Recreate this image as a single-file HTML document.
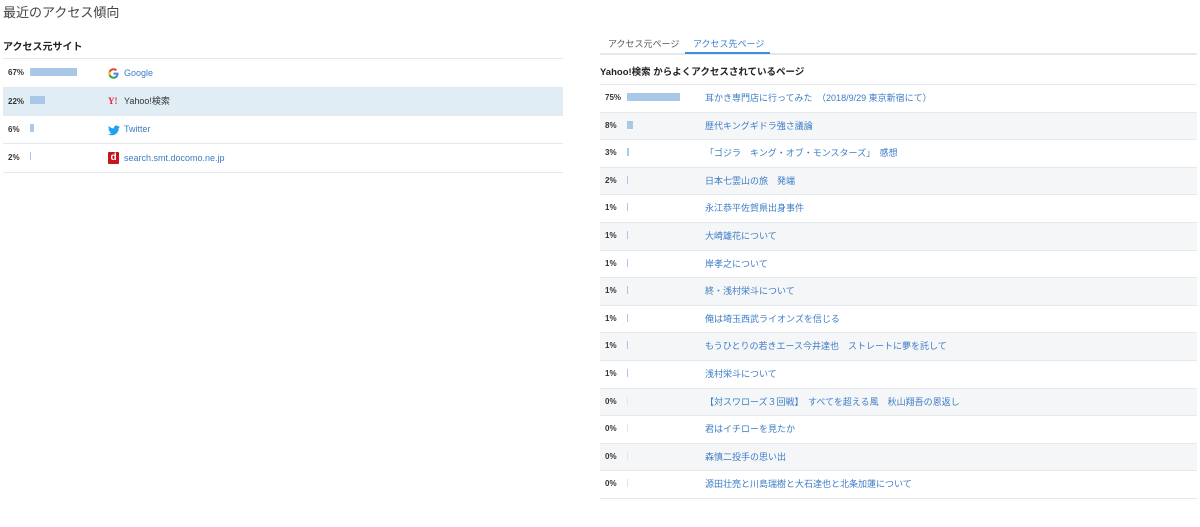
<!DOCTYPE html>
<html><head><meta charset="utf-8"><style>
*{margin:0;padding:0;box-sizing:border-box}
body{width:1200px;height:527px;background:#fff;font-family:"Liberation Sans","Noto Sans CJK JP",sans-serif;color:#333;position:relative;overflow:hidden}
.a{position:absolute}
.row{position:absolute;border-bottom:1px solid #e6e9ec;font-size:9px}
.p{position:absolute;top:0;font-size:8px;font-weight:bold;color:#333}
.bar{position:absolute;background:#a9c7e6;height:8px}
.lk{position:absolute;top:0;color:#3c7cc6;white-space:nowrap}
</style></head><body>
<div class="a" style="left:3px;top:2px;font-size:13px;color:#444">最近のアクセス傾向</div>
<div class="a" style="left:3px;top:38px;font-size:10px;font-weight:bold;color:#222">アクセス元サイト</div>
<div class="a" style="left:3px;top:58px;width:560px;height:1px;background:#e6e9ec"></div>

<div class="row" style="left:3px;top:59px;width:560px;height:29px;line-height:28px">
<span class="p" style="left:5px">67%</span><span class="bar" style="left:27px;top:9px;width:47px"></span>
<svg class="a" style="left:105px;top:9px" width="11" height="11" viewBox="0 0 24 24"><path d="M23 12.3c0-.8-.1-1.6-.2-2.3H12v4.4h6.2c-.3 1.4-1.1 2.6-2.3 3.4v2.8h3.7c2.2-2 3.4-5 3.4-8.3z" fill="#4285f4"/><path d="M12 23.5c3.1 0 5.7-1 7.6-2.8l-3.7-2.8c-1 .7-2.300 1.1-3.9 1.1-3 0-5.5-2-6.4-4.7H1.8v2.9C3.7 20.9 7.6 23.5 12 23.5z" fill="#34a853"/><path d="M5.6 14.3c-.2-.7-.4-1.5-.4-2.3s.1-1.6.4-2.3V6.8H1.8C1 8.4.5 10.1.5 12s.5 3.6 1.3 5.2l3.8-2.9z" fill="#fbbc05"/><path d="M12 5c1.7 0 3.2.6 4.4 1.7l3.3-3.3C17.7 1.6 15.1.5 12 .5 7.6.5 3.700 3.1 1.8 6.8l3.8 2.9C6.5 7 9 5 12 5z" fill="#ea4335"/></svg>
<span class="lk" style="left:121px">Google</span></div>

<div class="row" style="left:3px;top:88px;width:560px;height:28px;line-height:27px;background:#e0edf5">
<span class="p" style="left:5px">22%</span><span class="bar" style="left:27px;top:8px;width:15px"></span>
<span class="a" style="left:105px;top:0;font-size:9px;font-weight:bold;color:#e4223f;font-family:'Liberation Serif',serif">Y!</span>
<span class="a" style="left:121px;top:0;color:#333">Yahoo!検索</span></div>

<div class="row" style="left:3px;top:116px;width:560px;height:28px;line-height:27px">
<span class="p" style="left:5px">6%</span><span class="bar" style="left:27px;top:8px;width:4px"></span>
<svg class="a" style="left:105px;top:9px" width="12" height="11" viewBox="0 0 24 20"><path d="M24 2.4c-.9.4-1.8.6-2.8.8 1-.6 1.800-1.6 2.2-2.7-1 .6-2 1-3.1 1.2C19.4.7 18.1 0 16.6 0c-2.7 0-4.9 2.2-4.9 4.9 0 .4 0 .8.1 1.1C7.7 5.8 4.1 3.9 1.7.9c-.4.7-.7 1.6-.7 2.5 0 1.7.9 3.2 2.2 4.1-.8 0-1.6-.2-2.2-.6v.1c0 2.4 1.7 4.4 3.9 4.8-.4.1-.8.2-1.3.2-.3 0-.6 0-.9-.1.6 2 2.4 3.4 4.6 3.4-1.7 1.3-3.8 2.1-6.1 2.1-.4 0-.8 0-1.2-.1C2.2 18.8 4.8 19.6 7.5 19.6c9.1 0 14-7.5 14-14v-.6c1-.7 1.8-1.6 2.5-2.6z" fill="#1da1f2"/></svg>
<span class="lk" style="left:121px">Twitter</span></div>

<div class="row" style="left:3px;top:144px;width:560px;height:29px;line-height:28px">
<span class="p" style="left:5px">2%</span><span class="bar" style="left:27px;top:8px;width:1px"></span>
<span class="a" style="left:105px;top:8px;width:11px;height:12px;background:#c4161c;border-radius:1px;color:#fff;font-size:10px;font-weight:bold;line-height:11px;text-align:center">d</span>
<span class="lk" style="left:121px">search.smt.docomo.ne.jp</span></div>

<div class="a" style="left:608px;top:37px;font-size:9px;color:#555">アクセス元ページ</div>
<div class="a" style="left:693px;top:37px;font-size:9px;color:#3c7cc6">アクセス先ページ</div>
<div class="a" style="left:600px;top:53px;width:597px;height:2px;background:#e6e9ec"></div>
<div class="a" style="left:685px;top:52px;width:85px;height:2px;background:#3c8fd6"></div>
<div class="a" style="left:600px;top:64px;font-size:9.5px;font-weight:bold;color:#222">Yahoo!検索 からよくアクセスされているページ</div>
<div class="a" style="left:600px;top:84px;width:597px;height:1px;background:#e6e9ec"></div>

<div id="r"></div>
<script>
var d=[["75%",53,"耳かき専門店に行ってみた　（2018/9/29 東京新宿にて）"],["8%",6,"歴代キングギドラ強さ議論"],["3%",2,"「ゴジラ　キング・オブ・モンスターズ」　感想"],["2%",1,"日本七霊山の旅　発端"],["1%",1,"永江恭平佐賀県出身事件"],["1%",1,"大崎雄花について"],["1%",1,"岸孝之について"],["1%",1,"終・浅村栄斗について"],["1%",1,"俺は埼玉西武ライオンズを信じる"],["1%",1,"もうひとりの若きエース今井達也　ストレートに夢を託して"],["1%",1,"浅村栄斗について"],["0%",0,"【対スワローズ３回戦】　すべてを超える風　秋山翔吾の恩返し"],["0%",0,"君はイチローを見たか"],["0%",0,"森慎二投手の思い出"],["0%",0,"源田壮亮と川島瑞樹と大石達也と北条加蓮について"]];
var h="";
for(var i=0;i<d.length;i++){var t=85+i*27.6;
h+='<div class="row" style="left:600px;top:'+t+'px;width:597px;height:27.6px;line-height:26px;background:'+(i%2?'#f5f6f8':'#fff')+'"><span class="p" style="left:5px">'+d[i][0]+'</span>'+(d[i][1]?'<span class="bar" style="left:27px;top:8px;width:'+d[i][1]+'px"></span>':'<span class="bar" style="left:27px;top:8px;width:1px;background:#dde6ef"></span>')+'<span class="lk" style="left:105px">'+d[i][2]+'</span></div>';}
document.getElementById("r").innerHTML=h;
</script>
</body></html>
